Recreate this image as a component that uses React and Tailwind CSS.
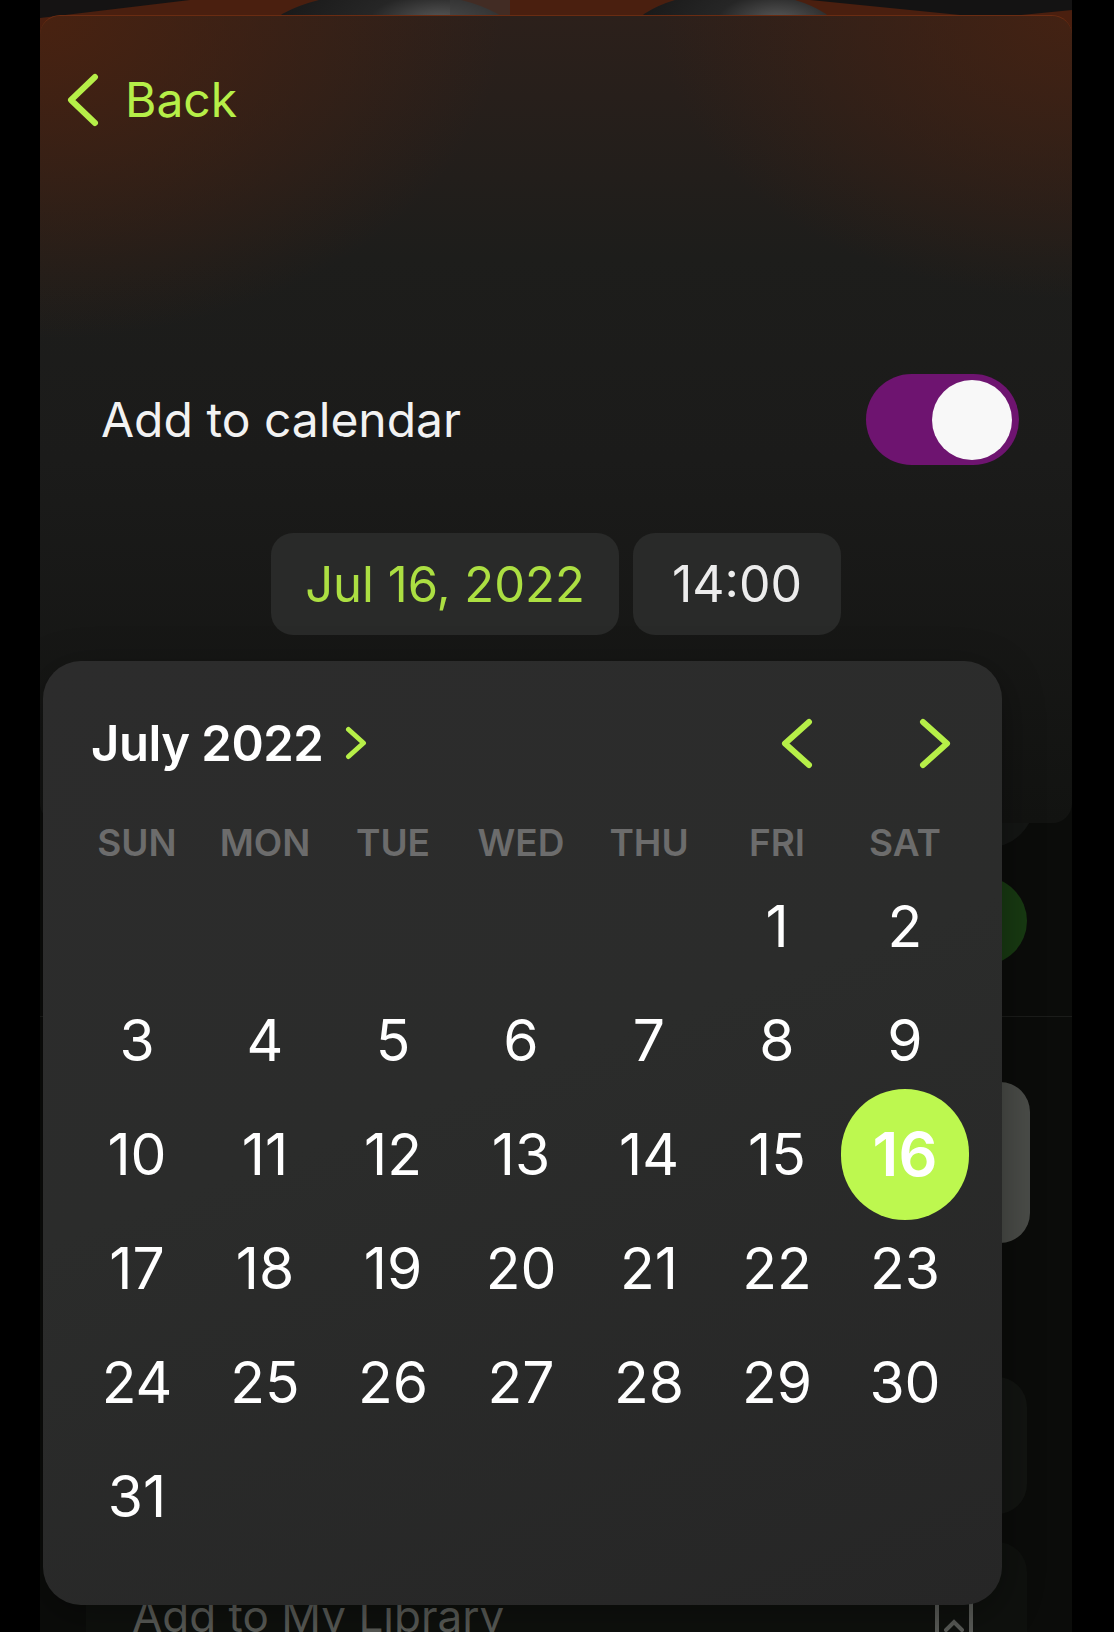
import React, { useState } from "react";

const lime = "#b6ef48";

const days = [null, null, null, null, null, ...Array.from({ length: 31 }, (_, i) => i + 1)];
const weekdays = ["SUN", "MON", "TUE", "WED", "THU", "FRI", "SAT"];

const Chevron = ({ dir = "left", w, h, stroke = 6 }) => {
  const pad = stroke / 2 + 1;
  const pts =
    dir === "left"
      ? `${w - pad},${pad} ${pad},${h / 2} ${w - pad},${h - pad}`
      : `${pad},${pad} ${w - pad},${h / 2} ${pad},${h - pad}`;
  return (
    <svg width={w} height={h} viewBox={`0 0 ${w} ${h}`} fill="none">
      <polyline points={pts} stroke={lime} strokeWidth={stroke} strokeLinecap="round" strokeLinejoin="round" />
    </svg>
  );
};

// artwork behind the sheet, only its top edge peeks out
const HeroArt = () => (
  <svg width="1032" height="60" viewBox="0 0 1032 60" className="block">
    <defs>
      <radialGradient id="cup" cx="0.7" cy="0.3" r="0.8">
        <stop offset="0" stopColor="#5a5a5a" />
        <stop offset="0.35" stopColor="#262626" />
        <stop offset="1" stopColor="#131313" />
      </radialGradient>
    </defs>
    <polygon points="0,0 150,0 0,18" fill="#151313" />
    <polygon points="770,0 1032,0 1032,10 950,18" fill="#141313" />
    <ellipse cx="350" cy="40" rx="128" ry="48" fill="url(#cup)" />
    <rect x="410" y="0" width="60" height="20" fill="#3a3a3a" opacity="0.5" />
    <ellipse cx="695" cy="40" rx="108" ry="48" fill="url(#cup)" />
  </svg>
);

const Toggle = () => {
  const [on, setOn] = useState(true);
  return (
    <button
      onClick={() => setOn(!on)}
      className={`w-[153px] h-[91px] rounded-full flex items-center px-[7px] ${on ? "bg-[#6e1470] justify-end" : "bg-[#3a3a3c] justify-start"}`}
    >
      <span className="w-[80px] h-[80px] rounded-full bg-[#f8f8f8]" />
    </button>
  );
};

const CalendarPopover = () => (
  <div className="absolute left-[3px] top-[661px] w-[959px] h-[944px] rounded-[38px] bg-[linear-gradient(160deg,#2c2c2c_0%,#2b2c2b_45%,#262626_100%)] shadow-[0_10px_40px_rgba(0,0,0,0.35)] pt-[50px] pb-[50px] flex flex-col">
    <div className="h-[64px] flex items-center pl-[48px] pr-[51px]">
      <span className="text-[49px] font-semibold text-white leading-none tracking-[-0.01em]">July 2022</span>
      <span className="ml-[22px] flex">
        <Chevron dir="right" w={22} h={34} stroke={5} />
      </span>
      <div className="ml-auto flex items-center gap-[106px]">
        <Chevron dir="left" w={32} h={51} />
        <Chevron dir="right" w={32} h={51} />
      </div>
    </div>

    <div className="mt-[47px] h-[40px] grid grid-cols-7 px-[30px] w-[956px]">
      {weekdays.map((d) => (
        <div key={d} className="flex items-center justify-center text-[37px] font-semibold text-[#6c6c6c] leading-none">
          {d}
        </div>
      ))}
    </div>

    <div className="mt-[7px] grid grid-cols-7 auto-rows-[114px] px-[30px] w-[956px]">
      {days.map((d, i) => (
        <div key={i} className="flex items-center justify-center">
          {d === 16 ? (
            <span className="w-[131px] h-[131px] rounded-full bg-[#bdf84f] flex items-center justify-center text-[61px] font-semibold text-white leading-none">
              16
            </span>
          ) : (
            <span className="text-[57px] text-white leading-none">{d}</span>
          )}
        </div>
      ))}
    </div>
  </div>
);

const Sheet = () => (
  <div className="absolute left-0 top-[15px] w-full h-[808px] rounded-[20px] border-t border-[#6a2c12] bg-[radial-gradient(ellipse_45%_40%_at_0%_0%,rgba(74,34,16,0.95),transparent),radial-gradient(ellipse_40%_35%_at_100%_0%,rgba(70,34,18,0.9),transparent),linear-gradient(180deg,#2c201b_0%,#1d1d1b_30%,#1b1b1a_55%,#121311_100%)] flex flex-col">
    <div className="mt-[57px] h-[54px] flex items-center pl-[27px] gap-[26px]">
      <Chevron dir="left" w={32} h={54} />
      <span className="text-[48px] leading-none" style={{ color: lime }}>
        Back
      </span>
    </div>

    <div className="mt-[247px] h-[91px] flex items-center justify-between pl-[61px] pr-[53px]">
      <span className="text-[48px] text-[#f2f2f2] leading-none">Add to calendar</span>
      <Toggle />
    </div>

    <div className="mt-[68px] flex justify-center gap-[14px]">
      <div className="w-[348px] h-[102px] rounded-[22px] bg-[#292a29] flex items-center justify-center">
        <span className="text-[49px] text-[#acdf42] leading-none">Jul 16, 2022</span>
      </div>
      <div className="w-[208px] h-[102px] rounded-[22px] bg-[#292a29] flex items-center justify-center">
        <span className="text-[50px] text-[#ececec] leading-none">14:00</span>
      </div>
    </div>
  </div>
);

export default function App() {
  return (
    <div className="min-h-screen bg-black font-['Inter',sans-serif]">
      <div className="relative ml-[40px] w-[1032px] h-[1632px] bg-[#0b0c0a] overflow-hidden flex flex-col">
        <div className="h-[440px] shrink-0 bg-[#4a1f0f]">
          <HeroArt />
        </div>

        <div className="mt-[312px] h-[96px] shrink-0 flex justify-end pr-[37px]">
          <span className="w-[96px] h-[96px] rounded-full bg-[#141614]" />
        </div>

        <div className="h-[169px] shrink-0 border-b border-[#1b1c1a] flex justify-end items-start pt-[29px] pr-[45px]">
          <span className="w-[88px] h-[88px] rounded-full bg-[#183a12]" />
        </div>

        <div className="mt-[65px] h-[161px] shrink-0 flex justify-end pr-[42px]">
          <div className="w-[420px] h-full rounded-[30px] bg-[#4a4c48]" />
        </div>

        <div className="mt-[134px] h-[137px] shrink-0 ml-[46px] mr-[45px] rounded-[30px] bg-[#121411]" />

        <div className="mt-[28px] h-[140px] shrink-0 ml-[46px] mr-[45px] rounded-[30px] bg-[#0f110e] relative flex items-start pt-[52px] pl-[46px]">
          <span className="text-[44px] text-[#5a5c58] leading-none">Add to My Library</span>
          <svg className="absolute left-[848px] top-[58px]" width="40" height="40" viewBox="0 0 40 40" fill="none">
            <path d="M3 0 V40 M37 0 V40" stroke="#5a5c58" strokeWidth="4" />
            <path d="M12 30 L20 22 L28 30" stroke="#5a5c58" strokeWidth="4" strokeLinecap="round" />
          </svg>
        </div>

        <Sheet />
        <CalendarPopover />
      </div>
    </div>
  );
}
